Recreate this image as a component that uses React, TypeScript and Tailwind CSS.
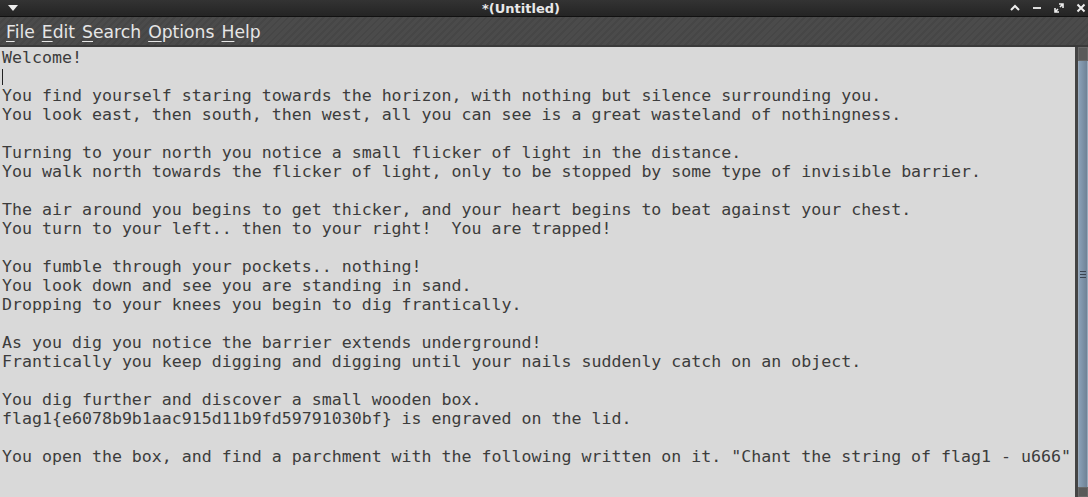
import React from 'react'

const lines = [
  'Welcome!',
  '',
  'You find yourself staring towards the horizon, with nothing but silence surrounding you.',
  'You look east, then south, then west, all you can see is a great wasteland of nothingness.',
  '',
  'Turning to your north you notice a small flicker of light in the distance.',
  'You walk north towards the flicker of light, only to be stopped by some type of invisible barrier.',
  '',
  'The air around you begins to get thicker, and your heart begins to beat against your chest.',
  'You turn to your left.. then to your right!  You are trapped!',
  '',
  'You fumble through your pockets.. nothing!',
  'You look down and see you are standing in sand.',
  'Dropping to your knees you begin to dig frantically.',
  '',
  'As you dig you notice the barrier extends underground!',
  'Frantically you keep digging and digging until your nails suddenly catch on an object.',
  '',
  'You dig further and discover a small wooden box.',
  'flag1{e6078b9b1aac915d11b9fd59791030bf} is engraved on the lid.',
  '',
  'You open the box, and find a parchment with the following written on it. "Chant the string of flag1 - u666"',
]

const menus = [
  ['F', 'ile'],
  ['E', 'dit'],
  ['S', 'earch'],
  ['O', 'ptions'],
  ['H', 'elp'],
]

export default function App() {
  return (
    <div className="w-[1088px] h-[497px] flex flex-col overflow-hidden bg-[#d9d9d9]">
      {/* title bar */}
      <div className="h-[17px] shrink-0 flex items-center bg-gradient-to-b from-[#333] to-[#242424] border-b border-[#111] relative">
        <svg className="ml-[8px]" width="10" height="6" viewBox="0 0 10 6">
          <path d="M0 0h10L5 6z" fill="#eee" />
        </svg>
        <div className="flex-1 text-center text-[13px] font-bold text-[#e8e8e8] leading-none pl-[14px]" style={{ fontFamily: '"DejaVu Sans", sans-serif' }}>
          *(Untitled)
        </div>
        <div className="flex items-center gap-[12px] pr-[2px]">
          <svg width="10" height="10" viewBox="0 0 10 10"><path d="M1 7l4-4 4 4" stroke="#eee" strokeWidth="2" fill="none" /></svg>
          <svg width="10" height="10" viewBox="0 0 10 10"><rect x="1" y="4" width="8" height="2" fill="#ddd" /></svg>
          <svg width="10" height="10" viewBox="0 0 10 10"><path d="M1 9l3-3M6 4l3-3M1 5v4h4M5 1h4v4" stroke="#eee" strokeWidth="1.6" fill="none" /></svg>
          <svg width="10" height="10" viewBox="0 0 10 10"><path d="M1.5 1.5l7 7M8.5 1.5l-7 7" stroke="#eee" strokeWidth="2" /></svg>
        </div>
      </div>
      {/* menu bar */}
      <div
        className="h-[30px] shrink-0 flex items-center gap-[7px] pl-[6px] pt-[3px] text-[17.2px] text-[#e6e6e6] border-b-[2px] border-[#3a3a3a]"
        style={{
          fontFamily: '"DejaVu Sans", sans-serif',
          backgroundImage:
            'repeating-linear-gradient(135deg, #4b4b4b 0px, #4b4b4b 3px, #464646 3px, #464646 5px)',
        }}
      >
        {menus.map(([u, rest]) => (
          <span key={u}>
            <span className="underline underline-offset-[3px] decoration-1">{u}</span>
            {rest}
          </span>
        ))}
      </div>
      {/* editor */}
      <div className="flex-1 flex min-h-0">
        <div
          className="flex-1 pl-[2px] pt-[1px] text-[16.6px] leading-[19px] text-[#3c3c3c] whitespace-pre overflow-hidden"
          style={{ fontFamily: '"DejaVu Sans Mono", monospace' }}
        >
          {lines.map((l, i) => (
            <div key={i} className="h-[19px]">
              {i === 1 ? <span className="inline-block w-[1px] h-[16px] bg-[#222] mt-[2px]" /> : l}
            </div>
          ))}
        </div>
        <div className="w-[13px] shrink-0 flex flex-col bg-[#3e3e3e] border-l-[3px] border-[#444]">
          <div className="h-[14px] bg-[#5a5a5a] border border-[#6a6a6a]" />
          <div className="flex-1 bg-gradient-to-r from-[#8aa0b6] to-[#6f8296] border-x border-[#9aaabb] flex items-center justify-center">
            <div className="flex flex-col gap-[2px] w-[6px]">
              <div className="h-[1px] bg-[#3b4450]" />
              <div className="h-[1px] bg-[#3b4450]" />
              <div className="h-[1px] bg-[#3b4450]" />
            </div>
          </div>
          <div className="h-[10px] bg-[#5a5a5a] border border-[#6a6a6a]" />
        </div>
      </div>
    </div>
  )
}
